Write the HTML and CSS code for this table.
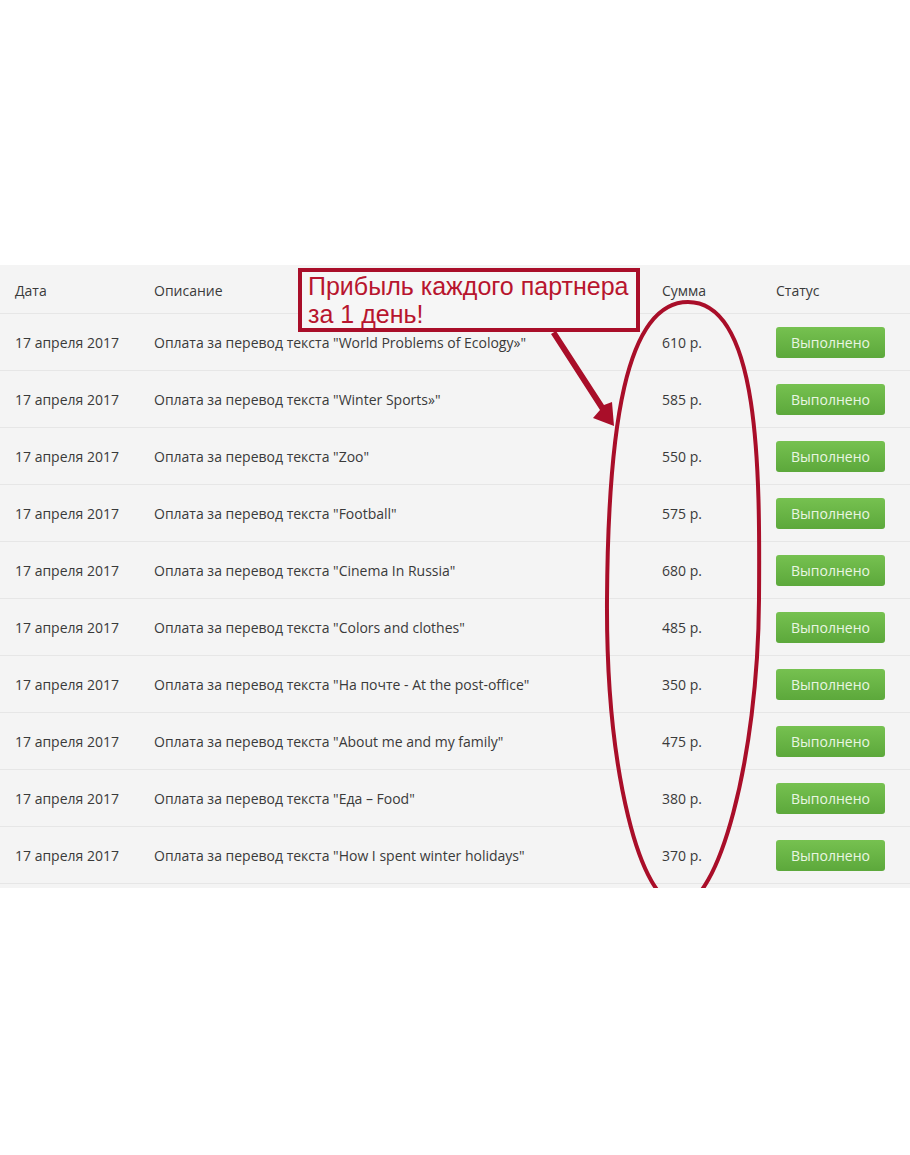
FILE: index.html
```html
<!DOCTYPE html>
<html lang="ru">
<head>
  <meta charset="UTF-8">
  <title>Выплаты</title>
  <link rel="stylesheet" href="styles.css">
</head>
<body>

  <div class="panel">
    <div class="row head">
      <div>Дата</div>
      <div>Описание</div>
      <div>Сумма</div>
      <div>Статус</div>
    </div>

    <div class="row">
      <div>17 апреля 2017</div>
      <div>Оплата за перевод текста "World Problems of Ecology»"</div>
      <div>610 р.</div>
      <div><span class="btn">Выполнено</span></div>
    </div>
    <div class="row">
      <div>17 апреля 2017</div>
      <div>Оплата за перевод текста "Winter Sports»"</div>
      <div>585 р.</div>
      <div><span class="btn">Выполнено</span></div>
    </div>
    <div class="row">
      <div>17 апреля 2017</div>
      <div>Оплата за перевод текста "Zoo"</div>
      <div>550 р.</div>
      <div><span class="btn">Выполнено</span></div>
    </div>
    <div class="row">
      <div>17 апреля 2017</div>
      <div>Оплата за перевод текста "Football"</div>
      <div>575 р.</div>
      <div><span class="btn">Выполнено</span></div>
    </div>
    <div class="row">
      <div>17 апреля 2017</div>
      <div>Оплата за перевод текста "Cinema In Russia"</div>
      <div>680 р.</div>
      <div><span class="btn">Выполнено</span></div>
    </div>
    <div class="row">
      <div>17 апреля 2017</div>
      <div>Оплата за перевод текста "Colors and clothes"</div>
      <div>485 р.</div>
      <div><span class="btn">Выполнено</span></div>
    </div>
    <div class="row">
      <div>17 апреля 2017</div>
      <div>Оплата за перевод текста "На почте - At the post-office"</div>
      <div>350 р.</div>
      <div><span class="btn">Выполнено</span></div>
    </div>
    <div class="row">
      <div>17 апреля 2017</div>
      <div>Оплата за перевод текста "About me and my family"</div>
      <div>475 р.</div>
      <div><span class="btn">Выполнено</span></div>
    </div>
    <div class="row">
      <div>17 апреля 2017</div>
      <div>Оплата за перевод текста "Еда – Food"</div>
      <div>380 р.</div>
      <div><span class="btn">Выполнено</span></div>
    </div>
    <div class="row last">
      <div>17 апреля 2017</div>
      <div>Оплата за перевод текста "How I spent winter holidays"</div>
      <div>370 р.</div>
      <div><span class="btn">Выполнено</span></div>
    </div>

    <!-- annotation drawn over the table -->
    <svg class="marks" viewBox="0 265 910 623" width="910" height="623">
      <path d="M 688 302 C 760 302, 760 470, 759 600 C 758 760, 718 905, 680 905 C 640 905, 606 770, 607 600 C 608 430, 625 302, 688 302 Z"
            fill="none" stroke="#a90e29" stroke-width="4"/>
      <polygon points="551,334 556,331 604,405 612,402 614,426 593,418 600,410" fill="#a90e29"/>
    </svg>
    <div class="note">Прибыль каждого партнера<br>за 1 день!</div>
  </div>

</body>
</html>
```

FILE: styles.css
```css
body {
  margin: 0;
  background: #fff;
  font-family: 'Open Sans', sans-serif;
  color: #3a3a3a;
}

.panel {
  position: relative;
  overflow: hidden;
  margin-top: 265px;
  width: 910px;
  height: 623px;
  box-sizing: border-box;
  background: #f4f4f4;
}

.row {
  display: grid;
  grid-template-columns: 139px 508px 114px 1fr;
  align-items: center;
  padding-left: 15px;
  height: 56px;
  border-top: 1px solid #e6e6e6;
  font-size: 14px;
}

.row.head {
  height: 48px;
  border-top: none;
  padding-top: 3px;
  box-sizing: border-box;
}

.row.last {
  border-bottom: 1px solid #e6e6e6;
}

.btn {
  display: inline-block;
  width: 109px;
  height: 31px;
  line-height: 31px;
  margin-top: 1px;
  text-align: center;
  border-radius: 3px;
  background: linear-gradient(#76c150, #5ca83b);
  color: #e9f6e2;
  font-size: 14px;
}

.marks {
  position: absolute;
  left: 0;
  top: 0;
}

.note {
  position: absolute;
  left: 298px;
  top: 3px;
  width: 328px;
  height: 56px;
  padding-left: 6px;
  border: 4px solid #a90e29;
  background: #f6f6f6;
  color: #b8152e;
  font-family: 'Liberation Sans', Arial, sans-serif;
  font-size: 25px;
  line-height: 28px;
}
```
